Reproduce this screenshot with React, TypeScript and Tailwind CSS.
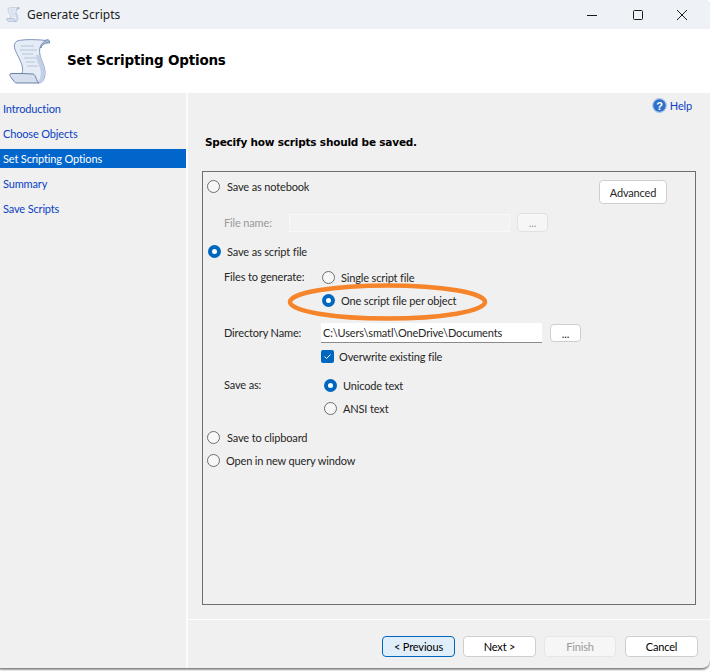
import React from "react";

function Scroll({ className }: { className: string }) {
  return (
    <svg viewBox="0 0 42 46" className={className} fill="none">
      <path d="M36 2.500C39 1 41 2 40.500 5C37 4.500 33 6 32 10L30 6Z" fill="#aebfdc" stroke="#6b82ad" strokeWidth="1" />
      <path d="M8 3C14 1 30 1.500 37 2.500C32 5 29.500 10 31 17C33 25 37.500 30 35.500 39C34.500 44 31 45.500 28 44.500L13 35.500C15 30 12 24 9 18C6 12 3 7 8 3Z" fill="#e6ecf6" stroke="#7f95bd" strokeWidth="1" />
      <path d="M31 17C33 25 37.500 30 35.500 39C34.500 44 31 45.500 28.500 44.500C31 42 33 36 31 30C29.500 26 27 22 27 17Z" fill="#c3d0e6" />
      <path d="M12 8H25M11 12H28M13 16H24M15 20H27M17 24H26M18 28H29" stroke="#c4cfe2" strokeWidth="1.300" />
      <path d="M13 35.500H2C0.500 36 0.500 37 1.500 38.500L5.500 44C6 44.800 7 45 8 45H30C27 43.500 27.500 37 24 36Z" fill="#d6dfee" stroke="#6b82ad" strokeWidth="1" />
    </svg>
  );
}

function Radio({ on, className = "" }: { on?: boolean; className?: string }) {
  return on ? (
    <span className={`flex h-[13px] w-[13px] shrink-0 items-center justify-center rounded-full bg-[#0067c0] ${className}`}>
      <span className="h-[5px] w-[5px] rounded-full bg-white" />
    </span>
  ) : (
    <span className={`h-[13px] w-[13px] shrink-0 rounded-full border border-[#6e6e6e] bg-[#f7f7f7] ${className}`} />
  );
}

function NavItem({ label, active }: { label: string; active?: boolean }) {
  return (
    <div className={`flex h-[19px] items-center pl-[3px] ${active ? "bg-[#0066cc] text-white" : "text-[#0a3fc4]"}`}>
      {label}
    </div>
  );
}

function Btn({ label, cls }: { label: string; cls: string }) {
  return (
    <div className={`flex h-[21px] items-center justify-center rounded-[4px] border ${cls}`}>{label}</div>
  );
}

export default function App() {
  return (
    <div className="h-[671px] w-[710px] overflow-hidden bg-white font-['Lato','Noto_Sans',sans-serif] text-[11px] leading-none tracking-[-0.15px] text-[#262626]">
      <div className="relative flex h-[669px] flex-col overflow-hidden rounded-br-lg rounded-tr-md border-b border-[#8a8a8a] bg-[#f0f0f0] shadow-[0_1px_2px_#999]">
        <div className="flex h-[29px] shrink-0 items-center bg-[#eef2f6]">
          <Scroll className="ml-[6px] h-[15px] w-[14px]" />
          <span className="ml-[7px] font-['Noto_Sans',sans-serif] text-[12px] tracking-normal text-[#1c1c1c]">Generate Scripts</span>
          <div className="ml-auto flex items-center">
            <svg width="12" height="12" viewBox="0 0 12 12" className="mr-[34px]">
              <path d="M1 6.500H11" stroke="#1a1a1a" strokeWidth="1" />
            </svg>
            <svg width="12" height="12" viewBox="0 0 12 12" className="mr-[32px]">
              <rect x="1.500" y="1.500" width="9" height="9" rx="1" fill="none" stroke="#1a1a1a" strokeWidth="1" />
            </svg>
            <svg width="12" height="12" viewBox="0 0 12 12" className="mr-[22px]">
              <path d="M1 1L11 11M11 1L1 11" stroke="#1a1a1a" strokeWidth="1" />
            </svg>
          </div>
        </div>

        <div className="flex h-[64px] shrink-0 items-center bg-white">
          <Scroll className="ml-[9px] h-[46px] w-[42px]" />
          <span className="ml-[16px] font-['DejaVu_Sans',sans-serif] text-[13.5px] font-bold tracking-[-0.2px] text-black">Set Scripting Options</span>
        </div>

        <div className="flex min-h-0 flex-1">
          <div className="flex w-[186px] shrink-0 flex-col gap-[6px] pt-[6px]">
            <NavItem label="Introduction" />
            <NavItem label="Choose Objects" />
            <NavItem label="Set Scripting Options" active />
            <NavItem label="Summary" />
            <NavItem label="Save Scripts" />
          </div>
          <div className="w-[2px] shrink-0 bg-white opacity-70" />
          <div className="flex min-w-0 flex-1 flex-col">
            <div className="flex h-[24px] items-center justify-end pr-[18px] pt-[1px] text-[#0a3fc4]">
              <svg width="15" height="15" viewBox="0 0 15 15" className="mr-[3px]">
                <circle cx="7.500" cy="7.500" r="6.800" fill="#2f6fc8" stroke="#a9c4e8" strokeWidth="1.200" />
                <text x="7.500" y="11.500" textAnchor="middle" fontSize="11" fontWeight="700" fill="#fff" fontFamily="Liberation Sans">?</text>
              </svg>
              Help
            </div>
            <div className="mt-[20px] h-[11px] pl-[17px] font-['DejaVu_Sans',sans-serif] text-[10.5px] font-bold tracking-[-0.2px] text-black">Specify how scripts should be saved.</div>

            <div className="ml-[14px] mt-[23px] flex h-[434px] w-[494px] flex-col border border-[#6e6e6e] pl-[4px] pt-[6px]">
              <div className="flex h-[26px] items-start justify-between pr-[28px]">
                <div className="flex h-4 items-center">
                  <Radio />
                  <span className="ml-[7px]">Save as notebook</span>
                </div>
                <div className="mt-[2px] flex h-[24px] w-[68px] items-center justify-center rounded-[4px] border border-[#cfcfcf] bg-white">Advanced</div>
              </div>

              <div className="mt-[8px] flex h-[20px] items-center pl-[17px] text-[#9a9a9a]">
                <span className="w-[65px]">File name:</span>
                <div className="mt-px h-[18px] w-[221px] border border-[#f8f8f8] bg-[#f2f2f2]" />
                <div className="ml-[7px] flex h-[19px] w-[31px] items-center justify-center rounded-[4px] border border-[#e2e2e2] bg-[#f6f6f6]">...</div>
              </div>

              <div className="mt-[11px] flex h-4 items-center pl-[1px]">
                <Radio on />
                <span className="ml-[6px]">Save as script file</span>
              </div>

              <div className="mt-[10px] flex h-4 items-center pl-[17px]">
                <span className="w-[98px] -translate-y-px">Files to generate:</span>
                <Radio />
                <span className="ml-[6px]">Single script file</span>
              </div>
              <div className="mt-[7px] flex h-4 items-center pl-[115px]">
                <Radio on />
                <span className="ml-[6px]">One script file per object</span>
              </div>

              <div className="mt-[15px] flex h-[20px] items-center pl-[17px]">
                <span className="w-[97px] -translate-y-[1px]">Directory Name:</span>
                <div className="flex h-[20px] w-[221px] items-center border-b border-[#8a8a8a] bg-white pb-px pl-[2px]">C:\Users\smatl\OneDrive\Documents</div>
                <div className="ml-[8px] flex h-[18px] w-[31px] items-center justify-center rounded-[4px] border border-[#cfcfcf] bg-white">...</div>
              </div>

              <div className="mt-[5px] flex h-4 items-center pl-[114px]">
                <span className="flex h-[13px] w-[13px] items-center justify-center rounded-[2px] bg-[#0067c0]">
                  <svg width="9" height="9" viewBox="0 0 9 9"><path d="M1.500 4.500L3.500 6.500L7.500 2.500" fill="none" stroke="#fff" strokeWidth="1" /></svg>
                </span>
                <span className="ml-[5px]">Overwrite existing file</span>
              </div>

              <div className="mt-[13px] flex h-4 items-center pl-[17px]">
                <span className="w-[100px] -translate-y-[1px]">Save as:</span>
                <Radio on />
                <span className="ml-[6px]">Unicode text</span>
              </div>
              <div className="mt-[7px] flex h-4 items-center pl-[117px]">
                <Radio />
                <span className="ml-[6px]">ANSI text</span>
              </div>

              <div className="mt-[13px] flex h-4 items-center">
                <Radio />
                <span className="ml-[7px]">Save to clipboard</span>
              </div>
              <div className="mt-[7px] flex h-4 items-center">
                <Radio />
                <span className="ml-[6px]">Open in new query window</span>
              </div>
            </div>

            <div className="mt-[14px] h-px w-full bg-white" />
            <div className="mt-[16px] flex justify-end gap-[8px] pr-[12px] text-black">
              <Btn label="< Previous" cls="w-[73px] border-[#0067c0] bg-[#e0eefa]" />
              <Btn label="Next >" cls="w-[73px] border-[#cfcfcf] bg-white" />
              <Btn label="Finish" cls="w-[72px] border-[#e6e6e6] bg-[#f6f6f6] text-[#9a9a9a]" />
              <Btn label="Cancel" cls="ml-px w-[73px] border-[#cfcfcf] bg-white" />
            </div>
          </div>
        </div>

        <svg width="206" height="50" viewBox="0 0 206 50" className="pointer-events-none absolute left-[285px] top-[278px]">
          <ellipse cx="102.500" cy="24" rx="97.500" ry="16.500" fill="none" stroke="#f5842a" strokeWidth="4.500" />
        </svg>
      </div>
    </div>
  );
}
